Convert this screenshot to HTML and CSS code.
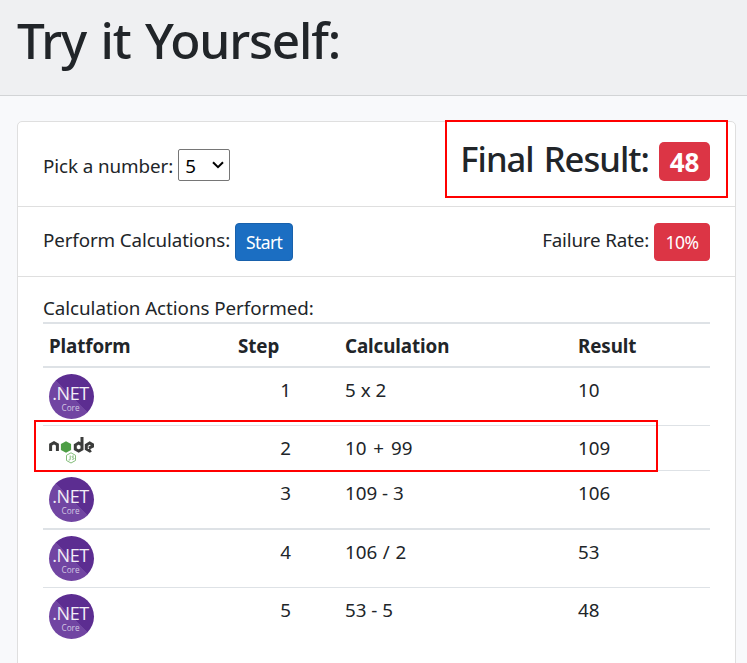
FILE: index.html
```
<!DOCTYPE html>
<html lang="en">
<head>
<meta charset="utf-8">
<title>Try it Yourself</title>
<link rel="stylesheet" href="styles.css">
</head>
<body>
<svg width="0" height="0" class="defs" aria-hidden="true">
  <symbol id="node" viewBox="0 0 45 28">
    <g fill="none" stroke="#3b3c3b" stroke-width="3">
      <path d="M1.6 15V8.7L5 6.8l3.4 1.9V15"/>
      <path d="M33 1v12.2l-3.3 1.9-3.4-1.9V9l3.4-2 3.3 2"/>
      <path d="M42 14.2l-1.2.8-3.5-2V9l3.4-2 3.2 1.9v1.3l-4 2"/>
    </g>
    <path d="M17 5.2l5.1 2.9v5.8L17 16.8l-5.1-2.9V8.1z" fill="#4d9e45"/>
    <path d="M22 16.8l4.5 2.5v5.2L22 27l-4.5-2.5v-5.2z" fill="none" stroke="#83bd7a" stroke-width="1"/>
    <path d="M21.2 19.5v3.7q0 1.2-1.6.8M25 20.3c-2-1-2.8.9-1.1 1.3 2 .4 1.1 2.4-1 1.5" fill="none" stroke="#83bd7a"/>
  </symbol>
</svg>

<header class="hero"><h1>Try it Yourself:</h1></header>

<main class="card">
  <section class="row row-pick">
    <label class="pick"><span class="t-pick">Pick a number:</span>
      <span class="select">5<svg width="12" height="8" viewBox="0 0 12 8"><path d="M1 1.2l5 5 5-5" fill="none" stroke="#000" stroke-width="2"/></svg></span>
    </label>
    <div class="final"><h2>Final Result:</h2><span class="badge">48</span></div>
  </section>
  <section class="row row-run">
    <div class="group"><span class="t-run">Perform Calculations:</span><button class="btn btn-primary">Start</button></div>
    <div class="group"><span class="t-rate">Failure Rate:</span><button class="btn btn-danger">10%</button></div>
  </section>
  <section class="actions">
    <div class="caption">Calculation Actions Performed:</div>
    <table>
      <colgroup><col class="c1"><col class="c2"><col class="c3"><col></colgroup>
      <tr class="head"><th>Platform</th><th>Step</th><th>Calculation</th><th>Result</th></tr>
      <tr class="r1"><td><div class="net"><span>.NET</span><small>Core</small></div></td><td>1</td><td>5 x 2</td><td>10</td></tr>
      <tr class="r2"><td><svg class="node"><use href="#node"/></svg></td><td>2</td><td>10 + 99</td><td>109</td></tr>
      <tr class="r3"><td><div class="net"><span>.NET</span><small>Core</small></div></td><td>3</td><td>109 - 3</td><td>106</td></tr>
      <tr class="r4"><td><div class="net"><span>.NET</span><small>Core</small></div></td><td>4</td><td>106 / 2</td><td>53</td></tr>
      <tr class="r5"><td><div class="net"><span>.NET</span><small>Core</small></div></td><td>5</td><td>53 - 5</td><td>48</td></tr>
    </table>
  </section>
</main>
<div class="mark mark-final"></div>
<div class="mark mark-row"></div>
</body>
</html>
```
FILE: styles.css
```
* { box-sizing: border-box; }
body {
  margin: 0;
  height: 663px;
  overflow: hidden;
  position: relative;
  background: #f8f9fb;
  color: #212529;
  font: 400 18.8px/30px "Noto Sans", "Open Sans", sans-serif;
}
.defs { position: absolute; }
h1, h2 { margin: 0; font-weight: 500; }
.hero {
  height: 96px;
  padding: 10px 17px 0;
  background: #eff0f2;
  border-bottom: 1px solid #d2d4d6;
}
h1 { font-size: 49.5px; line-height: 60px; letter-spacing: -1.2px; word-spacing: 3px; white-space: nowrap; }
.card {
  margin: 25px 11px 0 17px;
  height: 560px;
  background: #fff;
  border: 1px solid #dfdfdf;
  border-radius: 5px;
}
.row {
  display: flex;
  justify-content: space-between;
  padding: 0 25px;
  border-bottom: 1px solid #dfdfdf;
  white-space: nowrap;
}
.row-pick { height: 85px; }
.row-run { height: 70px; padding-top: 16px; }
.pick { display: flex; gap: 5px; padding-top: 27px; height: 60px; }
.t-pick { padding-top: 2px; letter-spacing: -0.08px; }
.t-run { letter-spacing: -0.12px; }
.t-rate { letter-spacing: -0.17px; }
.select {
  display: flex;
  align-items: center;
  justify-content: space-between;
  width: 52px;
  height: 32px;
  padding: 2px 5px 0 6px;
  border: 1px solid #767676;
  border-radius: 2px;
  color: #000;
}
.select svg { margin-bottom: 2px; }
.final { display: flex; gap: 10px; padding-top: 15px; }
h2 { font-size: 34.5px; line-height: 44px; letter-spacing: -0.95px; word-spacing: 2px; }
.badge {
  width: 51px;
  height: 39px;
  margin-top: 5px;
  border-radius: 5px;
  background: #dc3545;
  color: #fff;
  font-size: 26px;
  font-weight: 700;
  line-height: 41px;
  text-align: center;
}
.group { display: flex; gap: 5px; }
.group span { padding-top: 2px; }
.btn {
  height: 38px;
  padding: 0 0 1px;
  border: 1px solid #1861ac;
  border-radius: 4px;
  background: #1b6ec2;
  color: #fff;
  font: 17.5px/30px "Noto Sans", "Open Sans", sans-serif;
}
.btn-primary { width: 58px; letter-spacing: -0.6px; }
.btn-danger { width: 56px; border-color: #dc3545; background: #dc3545; letter-spacing: -0.5px; }
.actions { padding: 16px 25px 0; }
.caption { height: 29px; letter-spacing: -0.05px; }
table { width: 667px; border-spacing: 0; table-layout: fixed; }
.c1 { width: 189px; }
.c2 { width: 107px; }
.c3 { width: 233px; }
th, td { padding: 7px 6px 0; border-top: 1px solid #dee2e6; text-align: left; vertical-align: top; }
td:nth-child(2) { padding-right: 48px; text-align: right; }
td:first-child { padding-top: 6px; }
.head { height: 44px; }
.head th { letter-spacing: -0.1px; }
.head th, .r1 td, .r4 td { border-top-width: 2px; }
.r1 { height: 59px; }
.r2 { height: 45px; word-spacing: 2px; }
.r3 { height: 58px; }
.r4 { height: 59px; word-spacing: 0.7px; }
.r5 { height: 60px; }
td svg { display: block; }
.net {
  width: 45px;
  height: 45px;
  padding: 9px 2px 0 0;
  border-radius: 50%;
  background: linear-gradient(45deg, #7145a2 50%, #5c2d91 51%);
  color: #f2edf6;
  font-family: "Open Sans", sans-serif;
  text-align: center;
  white-space: nowrap;
}
.net span { display: block; font-size: 18px; line-height: 20px; letter-spacing: -0.4px; }
.net small { display: block; color: #d3c5e2; font-size: 8.2px; line-height: 9px; }
.node { width: 45px; height: 28px; margin-top: 4px; }
.mark { position: absolute; border: 2px solid #f00; }
.mark-final { left: 445px; top: 120px; width: 283px; height: 78px; }
.mark-row { left: 34px; top: 420px; width: 624px; height: 52px; }
```
